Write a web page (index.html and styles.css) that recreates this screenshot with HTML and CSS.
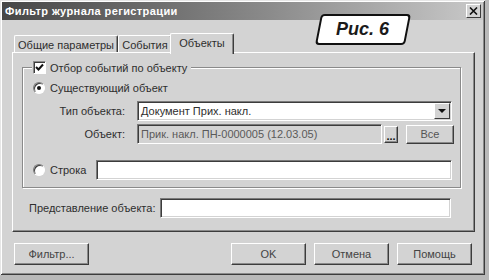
FILE: index.html
```html
<!DOCTYPE html>
<html lang="ru">
<head>
  <meta charset="UTF-8" />
  <title>Фильтр журнала регистрации</title>
  <link rel="stylesheet" href="styles.css">
</head>
<body>
  <div class="window">
    <div class="titlebar">
      <span class="title">Фильтр журнала регистрации</span>
      <span class="close">
        <svg width="9" height="8" viewBox="0 0 9 8"><path d="M1 0.5 L8 7.5 M8 0.5 L1 7.5" stroke="#111" stroke-width="1.6"/></svg>
      </span>
    </div>

    <div class="content">
      <div class="tabs">
        <div class="tab t1">Общие параметры</div>
        <div class="tab t2">События</div>
        <div class="tab active">Объекты</div>
      </div>

      <div class="panel">
        <div class="group">
          <div class="legend">
            <span class="check">
              <svg width="9" height="9" viewBox="0 0 9 9"><path d="M1 4 L3.5 6.5 L8 1.5" fill="none" stroke="#111" stroke-width="2"/></svg>
            </span>
            <span>Отбор событий по объекту</span>
          </div>

          <div class="radio-row">
            <span class="radio on"></span>
            <span>Существующий объект</span>
          </div>

          <div class="field-row first">
            <label>Тип объекта:</label>
            <div class="combo">
              <span>Документ Прих. накл.</span>
              <span class="drop"></span>
            </div>
          </div>

          <div class="field-row">
            <label>Объект:</label>
            <div class="input disabled">Прик. накл. ПН-0000005 (12.03.05)</div>
            <button class="dots">...</button>
            <button class="all">Все</button>
          </div>

          <div class="radio-row string">
            <span class="radio"></span>
            <span class="rlabel">Строка</span>
            <div class="input wide"></div>
          </div>
        </div>

        <div class="repr-row">
          <label>Представление объекта:</label>
          <div class="input repr"></div>
        </div>
      </div>

      <div class="buttons">
        <button class="btn">Фильтр...</button>
        <button class="btn ok">OK</button>
        <button class="btn">Отмена</button>
        <button class="btn">Помощь</button>
      </div>
    </div>

    <div class="badge"><span>Рис. 6</span></div>
  </div>
</body>
</html>
```

FILE: styles.css
```css
body {
  margin: 0;
  background: #b9b9b9;
  font-family: "Liberation Sans", Arial, sans-serif;
  font-size: 11px;
  color: #2e2e2e;
}
.window {
  position: relative;
  width: 485px;
  height: 275px;
  box-sizing: border-box;
  padding: 2px;
  background: #d3d3d3;
  box-shadow: inset 1px 1px 0 #e6e6e6, inset -1px -1px 0 #3c3c3c, inset 2px 2px 0 #fff, inset -2px -2px 0 #8a8a8a;
}
.titlebar {
  height: 18px;
  display: flex;
  align-items: center;
  justify-content: space-between;
  padding: 0 2px 0 3px;
  background: linear-gradient(to right, #474747, #8a8a8a 55%, #c9c9c9);
}
.title {
  color: #fff;
  font-weight: bold;
  font-size: 11px;
  letter-spacing: 0.4px;
}
.close {
  width: 15px;
  height: 14px;
  box-sizing: border-box;
  display: flex;
  align-items: center;
  justify-content: center;
  background: #d3d3d3;
  border-top: 1px solid #fff;
  border-left: 1px solid #fff;
  border-right: 1px solid #3c3c3c;
  border-bottom: 1px solid #3c3c3c;
}
.content {
  padding: 0 8px 0 10px;
}
.tabs {
  display: flex;
  align-items: flex-end;
  height: 19px;
  margin-top: 13px;
  padding-left: 2px;
}
.tab {
  height: 17px;
  box-sizing: border-box;
  display: flex;
  align-items: center;
  justify-content: center;
  border-top: 1px solid #fff;
  border-left: 1px solid #fff;
  border-right: 1px solid #3c3c3c;
  box-shadow: inset -1px 0 0 #8a8a8a;
  border-radius: 2px 2px 0 0;
  padding-top: 2px;
}
.t1 { width: 104px; }
.t2 { width: 54px; }
.tab.active {
  position: relative;
  z-index: 2;
  width: 64px;
  height: 21px;
  margin: 0 0 -2px -2px;
  padding-top: 0;
  padding-bottom: 3px;
  background: #d3d3d3;
}
.panel {
  width: 463px;
  height: 180px;
  box-sizing: border-box;
  border-top: 1px solid #fff;
  border-left: 1px solid #fff;
  border-right: 1px solid #3c3c3c;
  border-bottom: 1px solid #3c3c3c;
  box-shadow: inset -1px -1px 0 #8a8a8a;
}
.group {
  display: flex;
  flex-direction: column;
  width: 439px;
  box-sizing: border-box;
  margin: 14px 0 0 9px;
  padding-bottom: 7px;
  border: 1px solid #8a8a8a;
  box-shadow: 1px 1px 0 #fff, inset 1px 1px 0 #fff;
}
.legend {
  align-self: flex-start;
  display: flex;
  align-items: center;
  height: 13px;
  margin: -7px 0 0 9px;
  padding: 0 4px 0 1px;
  background: #d3d3d3;
}
.check {
  width: 13px;
  height: 13px;
  box-sizing: border-box;
  display: flex;
  align-items: center;
  justify-content: center;
  margin-right: 4px;
  background: #fff;
  border-top: 1px solid #8a8a8a;
  border-left: 1px solid #8a8a8a;
  border-right: 1px solid #fff;
  border-bottom: 1px solid #fff;
  box-shadow: inset 1px 1px 0 #3c3c3c;
}
.radio-row {
  display: flex;
  align-items: center;
  height: 14px;
  margin-top: 7px;
  padding-left: 10px;
}
.radio {
  width: 12px;
  height: 12px;
  box-sizing: border-box;
  display: flex;
  align-items: center;
  justify-content: center;
  margin-right: 5px;
  border-radius: 50%;
  background: #fff;
  border: 1px solid;
  border-color: #7a7a7a #fff #fff #7a7a7a;
  box-shadow: inset 1px 1px 0 #3c3c3c;
}
.radio.on::after {
  content: "";
  width: 4px;
  height: 4px;
  border-radius: 50%;
  background: #111;
}
.radio-row.string {
  height: 20px;
  margin-top: 16px;
}
.rlabel {
  width: 46px;
}
.field-row {
  display: flex;
  align-items: center;
  height: 20px;
  margin-top: 3px;
}
.field-row.first {
  margin-top: 6px;
}
.field-row label {
  width: 102px;
  margin-right: 12px;
  text-align: right;
}
.input, .combo {
  height: 20px;
  box-sizing: border-box;
  display: flex;
  align-items: center;
  padding-left: 3px;
  background: #fff;
  border-top: 1px solid #7a7a7a;
  border-left: 1px solid #7a7a7a;
  border-right: 1px solid #fff;
  border-bottom: 1px solid #fff;
  box-shadow: inset 1px 1px 0 #3c3c3c, inset -1px -1px 0 #d3d3d3;
}
.combo {
  width: 315px;
  justify-content: space-between;
  padding-right: 1px;
}
.drop {
  width: 16px;
  height: 16px;
  box-sizing: border-box;
  display: flex;
  align-items: center;
  justify-content: center;
  background: #d3d3d3;
  border-top: 1px solid #fff;
  border-left: 1px solid #fff;
  border-right: 1px solid #3c3c3c;
  border-bottom: 1px solid #3c3c3c;
}
.drop::after {
  content: "";
  border-left: 4px solid transparent;
  border-right: 4px solid transparent;
  border-top: 4px solid #111;
}
.input.disabled {
  width: 245px;
  background: #d3d3d3;
  color: #5a5a5a;
}
.input.wide {
  width: 356px;
}
button {
  font-family: "Liberation Sans", Arial, sans-serif;
  font-size: 11px;
  color: #3a3a3a;
  background: #d3d3d3;
  padding: 0;
  box-sizing: border-box;
  border-top: 1px solid #fff;
  border-left: 1px solid #fff;
  border-right: 1px solid #3c3c3c;
  border-bottom: 1px solid #3c3c3c;
  box-shadow: inset -1px -1px 0 #8a8a8a;
}
.dots {
  width: 14px;
  height: 17px;
  margin-left: 2px;
  font-weight: bold;
  line-height: 8px;
  color: #111;
  padding-top: 4px;
}
.all {
  width: 48px;
  height: 19px;
  margin-left: 8px;
  color: #555;
}
.repr-row {
  display: flex;
  align-items: center;
  height: 20px;
  margin-top: 10px;
  padding-left: 16px;
}
.repr-row label {
  width: 131px;
}
.input.repr {
  width: 291px;
}
.buttons {
  display: flex;
  gap: 8px;
  width: 463px;
  box-sizing: border-box;
  margin-top: 11px;
  padding: 0 3px 0 2px;
}
.btn {
  width: 75px;
  height: 22px;
  color: #444;
}
.btn.ok {
  margin-left: auto;
}
.badge {
  position: absolute;
  left: 318px;
  top: 14px;
  width: 90px;
  height: 31px;
  box-sizing: border-box;
  display: flex;
  align-items: center;
  justify-content: center;
  background: #fff;
  border: 2px solid #111;
  border-radius: 4px;
  transform: skewX(-11deg);
}
.badge span {
  transform: skewX(11deg);
  font-size: 18px;
  font-weight: bold;
  font-style: italic;
  color: #1a1a1a;
}
```
